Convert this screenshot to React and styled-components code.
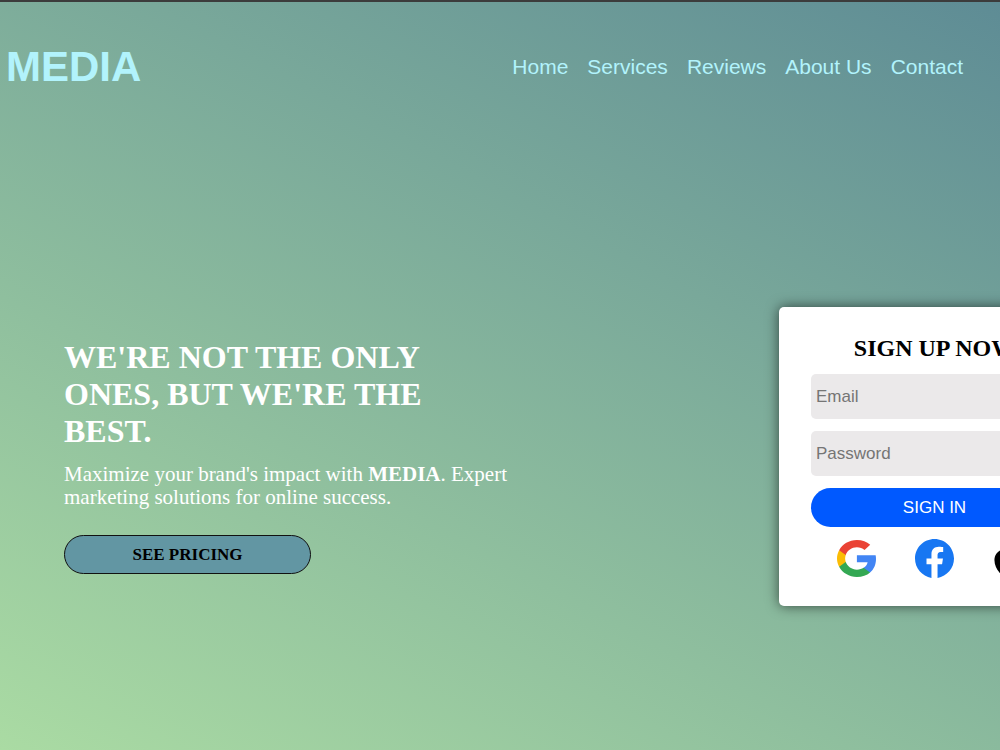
import React from 'react';
import styled, {createGlobalStyle} from 'styled-components';

const links = ['Home', 'Services', 'Reviews', 'About Us', 'Contact'];

function App() {
  return (
    <>
      <GlobalStyle />
      <Page>
        <Header>
          <Logo>MEDIA</Logo>
          <Nav>
            {links.map((link) => (
              <NavLink key={link} href="#">{link}</NavLink>
            ))}
          </Nav>
        </Header>
        <Hero>
          <Intro>
            <Title>WE'RE NOT THE ONLY ONES, BUT WE'RE THE BEST.</Title>
            <Text>
              Maximize your brand's impact with <strong>MEDIA</strong>. Expert marketing solutions for online success.
            </Text>
            <Pricing type="button">SEE PRICING</Pricing>
          </Intro>
          <Form onSubmit={(e) => e.preventDefault()}>
            <FormTitle>SIGN UP NOW</FormTitle>
            <Input type="email" placeholder="Email" aria-label="Email" />
            <Input type="password" placeholder="Password" aria-label="Password" />
            <SignIn type="submit">SIGN IN</SignIn>
            <Socials>
              <Social type="button" aria-label="Google"><Google /></Social>
              <Social type="button" aria-label="Facebook"><Facebook /></Social>
              <Social type="button" aria-label="Apple"><Apple /></Social>
            </Socials>
          </Form>
        </Hero>
      </Page>
    </>
  )
}

const Google = () => (
  <svg width="39" height="37" viewBox="1 1 21.56 22" preserveAspectRatio="none">
    <path fill="#4285f4" d="M22.56 12.25c0-.78-.07-1.53-.2-2.25H12v4.26h5.92c-.26 1.37-1.04 2.53-2.21 3.31v2.77h3.57c2.08-1.92 3.28-4.74 3.28-8.09z" />
    <path fill="#34a853" d="M12 23c2.97 0 5.46-.98 7.28-2.66l-3.57-2.77c-.98.66-2.23 1.06-3.71 1.06-2.86 0-5.29-1.93-6.16-4.53H2.18v2.84C3.99 20.53 7.7 23 12 23z" />
    <path fill="#fbbc05" d="M5.84 14.09c-.22-.69-.35-1.43-.35-2.09s.13-1.43.35-2.09V7.07H2.18C1.43 8.55 1 10.22 1 12s.43 3.45 1.18 4.93l2.85-2.22.81-.62z" />
    <path fill="#ea4335" d="M12 5.38c1.62 0 3.06.56 4.21 1.64l3.15-3.15C17.45 2.09 14.97 1 12 1 7.7 1 3.99 3.47 2.18 7.07l3.66 2.84c.87-2.6 3.3-4.53 6.16-4.53z" />
  </svg>
)

const Facebook = () => (
  <svg width="39" height="39" viewBox="0 0 24 24">
    <path fill="#1877f2" d="M24 12.073c0-6.627-5.373-12-12-12s-12 5.373-12 12c0 5.99 4.388 10.954 10.125 11.854v-8.385H7.078v-3.47h3.047V9.43c0-3.007 1.792-4.669 4.533-4.669 1.312 0 2.686.235 2.686.235v2.953H15.83c-1.491 0-1.956.925-1.956 1.874v2.25h3.328l-.532 3.47h-2.796v8.385C19.612 23.027 24 18.062 24 12.073z" />
  </svg>
)

const Apple = () => (
  <svg width="38" height="37" viewBox="2 0 20 24" preserveAspectRatio="none">
    <path fill="#000" d="M12.152 6.896c-.948 0-2.415-1.078-3.96-1.04-2.04.027-3.91 1.183-4.961 3.014-2.117 3.675-.546 9.103 1.519 12.09 1.013 1.454 2.208 3.09 3.792 3.039 1.52-.065 2.09-.987 3.935-.987 1.831 0 2.35.987 3.96.948 1.637-.026 2.676-1.48 3.676-2.948 1.156-1.688 1.636-3.325 1.662-3.415-.039-.013-3.182-1.221-3.22-4.857-.026-3.04 2.48-4.494 2.597-4.559-1.429-2.09-3.623-2.324-4.39-2.376-2-.156-3.675 1.09-4.61 1.09zM15.53 3.83c.843-1.012 1.4-2.427 1.245-3.83-1.207.052-2.662.805-3.532 1.818-.78.896-1.454 2.338-1.273 3.714 1.338.104 2.715-.688 3.559-1.701" />
  </svg>
)

export default App

const GlobalStyle = createGlobalStyle`
  * {
    box-sizing: border-box;
  }
  body {
    margin: 0;
    font-family: "Liberation Serif", serif;
  }
`
const Page = styled.div`
  display: flex;
  flex-direction: column;
  min-height: 100vh;
  overflow: hidden;
  border-top: 2px solid #3c3c3c;
  background: linear-gradient(28deg, #aadba3, #5e8c95);
`
const Header = styled.header`
  display: flex;
  justify-content: space-between;
  align-items: center;
  padding: 41px 37px 39px 6px;
  font-family: "Liberation Sans", sans-serif;
  color: #b2f3fc;
`
const Logo = styled.div`
  font-size: 42px;
  line-height: 48px;
  font-weight: bold;
`
const Nav = styled.nav`
  display: flex;
  gap: 19px;
`
const NavLink = styled.a`
  font-size: 21px;
  line-height: 24px;
  color: inherit;
  text-decoration: none;
`
/* the form runs past the right edge of the page */
const Hero = styled.main`
  flex: 1;
  display: flex;
  justify-content: space-between;
  align-items: center;
  padding: 32px 0 0 64px;
  margin-right: -90px;
`
const Intro = styled.section`
  max-width: 450px;
  color: #fff;
`
const Title = styled.h1`
  margin: 0 0 13px;
  font-size: 32px;
  line-height: 37px;
`
const Text = styled.p`
  margin: 0 0 26px;
  font-size: 21px;
  line-height: 23px;
`
const Pricing = styled.button`
  width: 247px;
  height: 39px;
  padding: 2px 0 0;
  border: 1px solid #111;
  border-radius: 20px;
  background: #6296a3;
  color: #000;
  font-family: inherit;
  font-size: 17px;
  font-weight: bold;
  cursor: pointer;
`
const Form = styled.form`
  display: flex;
  flex-direction: column;
  gap: 12px;
  flex: none;
  width: 311px;
  padding: 28px 32px;
  border-radius: 5px;
  background: #fff;
  box-shadow: 0 0 13px rgba(0, 0, 0, 0.6);
`
const FormTitle = styled.h2`
  margin: 0;
  font-size: 24px;
  line-height: 27px;
  text-align: center;
`
const Input = styled.input`
  height: 45px;
  padding: 2px 5px 0;
  border: none;
  border-radius: 5px;
  background: #ebe9ea;
  font-family: "Liberation Sans", sans-serif;
  font-size: 17px;

  &::placeholder {
    color: #757575;
  }
`
const SignIn = styled.button`
  height: 39px;
  padding: 2px 0 0;
  border: none;
  border-radius: 20px;
  background: #0059ff;
  color: #fff;
  font-family: "Liberation Sans", sans-serif;
  font-size: 17px;
  cursor: pointer;
`
const Socials = styled.div`
  display: flex;
  justify-content: center;
  gap: 39px;
`
const Social = styled.button`
  display: flex;
  justify-content: center;
  align-items: center;
  width: 39px;
  height: 39px;
  padding: 0;
  border: none;
  background: none;
  cursor: pointer;
`
